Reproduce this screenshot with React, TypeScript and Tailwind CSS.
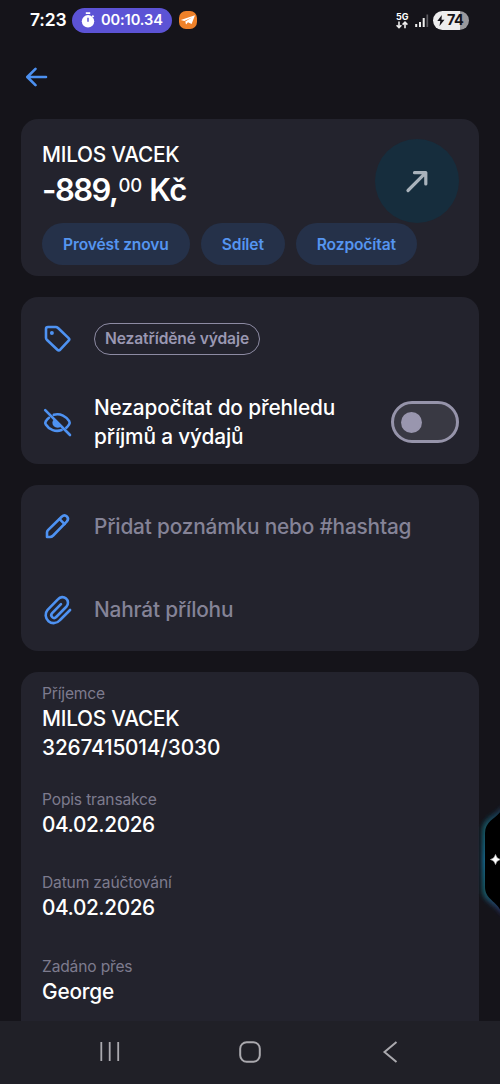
const actions = ["Provést znovu", "Sdílet", "Rozpočítat"];

const details = [
  { label: "Popis transakce", value: "04.02.2026", tight: true },
  { label: "Datum zaúčtování", value: "04.02.2026", tight: true },
  { label: "Zadáno přes", value: "George" },
];

export default function App() {
  return (
    <main
      className="relative flex h-[1084px] w-[500px] flex-col overflow-hidden bg-[#15141a] text-white"
      style={{ fontFamily: "Inter, 'Noto Sans', sans-serif" }}
    >
      <StatusBar />

      {/* HEADER */}
      <header className="flex h-[79px] shrink-0 items-center pb-[5px] pl-[25px]">
        <button aria-label="Zpět">
          <BackIcon />
        </button>
      </header>

      <div className="flex min-h-0 grow flex-col gap-[21px] overflow-hidden px-[21px]">
        {/* SUMMARY */}
        <section className="h-[157px] shrink-0 rounded-[17px] bg-[#23232d] px-[21px] pt-5">
          <div className="flex h-[84px] justify-between">
            <div className="pt-px">
              <h1 className="h-[30px] text-[20.8px] leading-[30px] font-medium tracking-[-0.25px]">
                MILOS VACEK
              </h1>
              <p className="flex h-10 text-[31px] leading-10 font-semibold tracking-[-0.6px] whitespace-pre">
                <span className="tracking-[-1.5px]">-889,</span>
                <span className="-mt-[5px] ml-px text-[18.5px] font-medium tracking-[-0.1px]">00</span> Kč
              </p>
            </div>

            <div className="-mr-px flex size-[84px] items-center justify-center rounded-full bg-[#162d3d]">
              <SendIcon />
            </div>
          </div>

          <div className="flex gap-[11px]">
            {actions.map((action) => (
              <button
                key={action}
                className="h-[42px] rounded-full bg-[#253149] px-[21px] pt-px text-[15.6px] font-semibold tracking-[-0.13px] whitespace-nowrap text-[#5595f0]"
              >
                {action}
              </button>
            ))}
          </div>
        </section>

        {/* CATEGORY */}
        <section className="h-[167px] shrink-0 rounded-[17px] bg-[#23232d] px-[21px]">
          <div className="flex h-[83px] items-center gap-[21px]">
            <TagIcon />
            <span className="flex h-8 items-center rounded-full border border-[#8d8ba3] px-[10px] text-[15.6px] font-semibold tracking-[-0.12px] whitespace-nowrap text-[#9a98b2]">
              Nezatříděné výdaje
            </span>
          </div>

          <div className="flex h-[84px] items-center gap-[21px]">
            <EyeOffIcon />
            <p className="grow text-[20.8px] leading-[29px] font-medium tracking-[-0.14px] whitespace-nowrap">
              Nezapočítat do přehledu
              <br />
              příjmů a výdajů
            </p>
            <button
              aria-label="Nezapočítat"
              className="-mr-px flex h-[42px] w-[68px] shrink-0 items-center rounded-full border-[3px] border-[#9694aa] bg-[#393943] pl-[7px]"
            >
              <span className="size-[21px] rounded-full bg-[#9996ae]" />
            </button>
          </div>
        </section>

        {/* NOTE */}
        <section className="h-[166px] shrink-0 rounded-[17px] bg-[#23232d] px-[21px]">
          <NoteRow icon={<PencilIcon />} text="Přidat poznámku nebo #hashtag" />
          <NoteRow icon={<ClipIcon />} text="Nahrát přílohu" />
        </section>

        {/* DETAILS */}
        <section className="flex min-h-0 grow flex-col gap-[27px] rounded-t-[17px] bg-[#23232d] px-[21px] pt-[11px]">
          <div className="h-[78.5px] shrink-0">
            <Label text="Příjemce" />
            <p className="text-[20.8px] leading-[29px] font-medium tracking-[-0.25px]">MILOS VACEK</p>
            <Value text="3267415014/3030" />
          </div>

          {details.map((item) => (
            <div key={item.label} className="h-[56.5px] shrink-0">
              <Label text={item.label} />
              <Value text={item.value} tight={item.tight} />
            </div>
          ))}
        </section>
      </div>

      <NavBar />
      <EdgePanel />
    </main>
  );
}

/* ---------------- COMPONENTS ---------------- */

function Label({ text }: { text: string }) {
  return (
    <p className="h-[21px] text-[15.6px] leading-[21px] tracking-[-0.17px] text-[#7d7b8e]">
      {text}
    </p>
  );
}

function Value({ text, tight }: any) {
  return (
    <p
      className={`text-[20.8px] leading-[29px] font-medium ${
        tight ? "tracking-[-0.4px]" : "tracking-[-0.16px]"
      }`}
    >
      {text}
    </p>
  );
}

function NoteRow({ icon, text }: any) {
  return (
    <div className="flex h-[83px] items-center gap-[21px]">
      {icon}
      <span className="text-[20.8px] font-medium tracking-[-0.17px] whitespace-nowrap text-[#858397]">
        {text}
      </span>
    </div>
  );
}

function StatusBar() {
  return (
    <div className="flex h-10 shrink-0 items-center justify-between pr-[31px] pl-[30px]">
      <div className="flex items-center">
        <span className="w-[42px] text-[17.5px] font-semibold tracking-[-0.2px]">7:23</span>

        <div className="flex h-[25px] w-[100px] items-center gap-[6px] rounded-full bg-[#5c53d5] pl-[9px]">
          <svg width="14" height="16" viewBox="0 0 14 16">
            <circle cx="7" cy="9.3" r="6.2" fill="#fff" />
            <path d="M4.8 1.2h4.4M11.3 3.6l1.3 1.2" stroke="#fff" strokeWidth="1.8" />
            <path d="M7 5.8v4" stroke="#5c53d5" strokeWidth="1.5" />
          </svg>
          <span className="pt-px text-[14.6px] font-semibold tracking-[-0.1px] whitespace-nowrap">
            00:10.34
          </span>
        </div>

        <div className="ml-[7px] flex size-[18px] items-center justify-center rounded-[7px] bg-[#ee8129]">
          <svg width="16" height="14" viewBox="0 0 16 14" fill="#fff">
            <path d="M.8 7 15 2.2 11.6 11 8 9.2l-2 2.3-.7-3L12 4.4 4.3 8z" />
          </svg>
        </div>
      </div>

      <div className="flex items-center">
        <div className="flex w-[19px] flex-col">
          <span className="text-[9px] leading-[9px] font-bold">5G</span>
          <svg width="12" height="8" viewBox="0 0 12 8" fill="none" stroke="#eee" strokeWidth="1.6">
            <path d="M3 .5v6M.6 4.2 3 6.6l2.4-2.4M9 7.3v-6M6.6 3.6 9 1.2l2.4 2.4" />
          </svg>
        </div>

        <svg width="14" height="14" viewBox="0 0 14 14" className="mt-[2px]">
          <path d="M1.2 13v-3M5 13V8M8.7 13V4" stroke="#eee" strokeWidth="2" />
          <path d="M12.3 13V.5" stroke="#5c5b61" strokeWidth="1.7" />
        </svg>

        <div className="ml-1 flex h-[19px] w-9 items-center rounded-full bg-linear-to-r from-[#ededee] from-74% to-[#99999d] to-74% pl-1 text-[#15141a]">
          <svg width="8" height="11" viewBox="0 0 8 11" fill="currentColor">
            <path d="M4.8 0 .3 6h3L2.5 11l5-6.2h-3z" />
          </svg>
          <span className="ml-[2px] text-[14.5px] font-bold tracking-[-0.5px]">74</span>
        </div>
      </div>
    </div>
  );
}

function NavBar() {
  return (
    <nav className="flex h-[63px] shrink-0 items-center justify-between bg-[#202027] pr-[100px] pb-[2px] pl-[99px]">
      <svg width="21" height="21" viewBox="0 0 21 21" stroke="#aaa9ae" strokeWidth="1.8">
        <path d="M2.3 1v19M10.7 1v19M19.2 1v19" />
      </svg>
      <svg
        width="22"
        height="22"
        viewBox="0 0 22 22"
        fill="none"
        stroke="#aaa9ae"
        strokeWidth="2"
        className="mr-[3px]"
      >
        <rect x="1.2" y="1.2" width="19.6" height="19.6" rx="6.5" />
      </svg>
      <svg width="18" height="22" viewBox="0 0 18 22" fill="none" stroke="#aaa9ae" strokeWidth="2">
        <path d="M14.5 1 2.5 11l12 10" />
      </svg>
    </nav>
  );
}

function EdgePanel() {
  return (
    <svg width="32" height="130" viewBox="0 0 32 130" className="absolute top-[795px] right-0">
      <defs>
        <filter id="glow" x="-50%" y="-20%" width="200%" height="140%">
          <feGaussianBlur stdDeviation="2.3" />
        </filter>
        <linearGradient id="edge" x1="0" y1="0" x2="0" y2="1">
          <stop offset="0" stopColor="#1c2c48" />
          <stop offset=".2" stopColor="#14545f" />
          <stop offset=".5" stopColor="#12668a" />
          <stop offset=".8" stopColor="#14545f" />
          <stop offset="1" stopColor="#2b2b62" />
        </linearGradient>
      </defs>
      <path
        d="M34 12C31 20 15 22 15 36v58c0 14 16 15 19 25z"
        fill="url(#edge)"
        stroke="url(#edge)"
        strokeWidth="2"
        filter="url(#glow)"
      />
      <path d="M34 14C30 23 17 25 17 38v54c0 13 13 14 17 27z" fill="#000" />
      <path
        d="M27.5 59.5q.8 4.2 5 5-4.2.8-5 5-.8-4.2-5-5 4.2-.8 5-5z"
        fill="#fff"
        stroke="#fff"
        strokeWidth=".5"
      />
    </svg>
  );
}

/* ---------------- ICONS ---------------- */

function BackIcon() {
  return (
    <svg
      width="24"
      height="20"
      viewBox="0 0 24 20"
      fill="none"
      stroke="#4c90f0"
      strokeWidth="2.6"
      strokeLinecap="round"
      strokeLinejoin="round"
    >
      <path d="M21 10H2.5M10.5 1.8 2.3 10l8.2 8.2" />
    </svg>
  );
}

function SendIcon() {
  return (
    <svg
      width="24"
      height="24"
      viewBox="0 0 24 24"
      fill="none"
      stroke="#a9b2bb"
      strokeWidth="3.2"
      strokeLinecap="round"
      strokeLinejoin="round"
    >
      <path d="M3 21.500 20.800 3.700M9.500 3.700h11.300V15" />
    </svg>
  );
}

function RowIcon({ children }: any) {
  return (
    <svg
      width="31"
      height="31"
      viewBox="0 0 31 31"
      className="shrink-0"
      fill="none"
      stroke="#4e92f2"
      strokeWidth="2.6"
      strokeLinecap="round"
      strokeLinejoin="round"
    >
      {children}
    </svg>
  );
}

function TagIcon() {
  return (
    <RowIcon>
      <path d="M4 6q0-2 2-2h7.800q1.200 0 2 .8l10.800 10.300q1.300 1.300 0 2.600l-8.400 9q-1.400 1.300-2.800 0L4.800 16.700Q4 15.900 4 14.700z" />
      <circle cx="9.900" cy="10" r="2" fill="#4e92f2" stroke="none" />
    </RowIcon>
  );
}

function EyeOffIcon() {
  return (
    <RowIcon>
      <path d="M3.200 3.200 28 28" />
      <path d="M11.800 7.800C18.500 6 24.500 9.500 27.200 14.200q1 1.700-.1 3.200-1.200 1.900-2.800 3.300" />
      <path d="M7 10.800q-2 1.400-3.200 3.500-1 1.600 0 3.200c3.400 5.400 9.800 7.700 15.800 5.600" />
      <path d="M11.900 12.200 19 19.400a4.900 4.900 0 0 1-7.100-7.200z" fill="#4e92f2" stroke="none" />
    </RowIcon>
  );
}

function PencilIcon() {
  return (
    <RowIcon>
      <path d="M5 26v-4.600q0-1.300 1-2.300L19.700 5.700q2.800-2.500 5.200-.2t-.2 5.200L11.200 24.500Q9.700 26 8 26z" />
      <path d="m17.600 8.200 5 5" />
    </RowIcon>
  );
}

function ClipIcon() {
  return (
    <RowIcon>
      <path
        transform="scale(1.3)"
        strokeWidth="2"
        d="m21.600 12.300-7.900 7.900a6 6 0 0 1-9.400-8L12.400 3.900A4.200 4.200 0 0 1 18.900 9.600l-8 8.100a2.100 2.100 0 0 1-3.100-3l6.800-6.900"
      />
    </RowIcon>
  );
}
